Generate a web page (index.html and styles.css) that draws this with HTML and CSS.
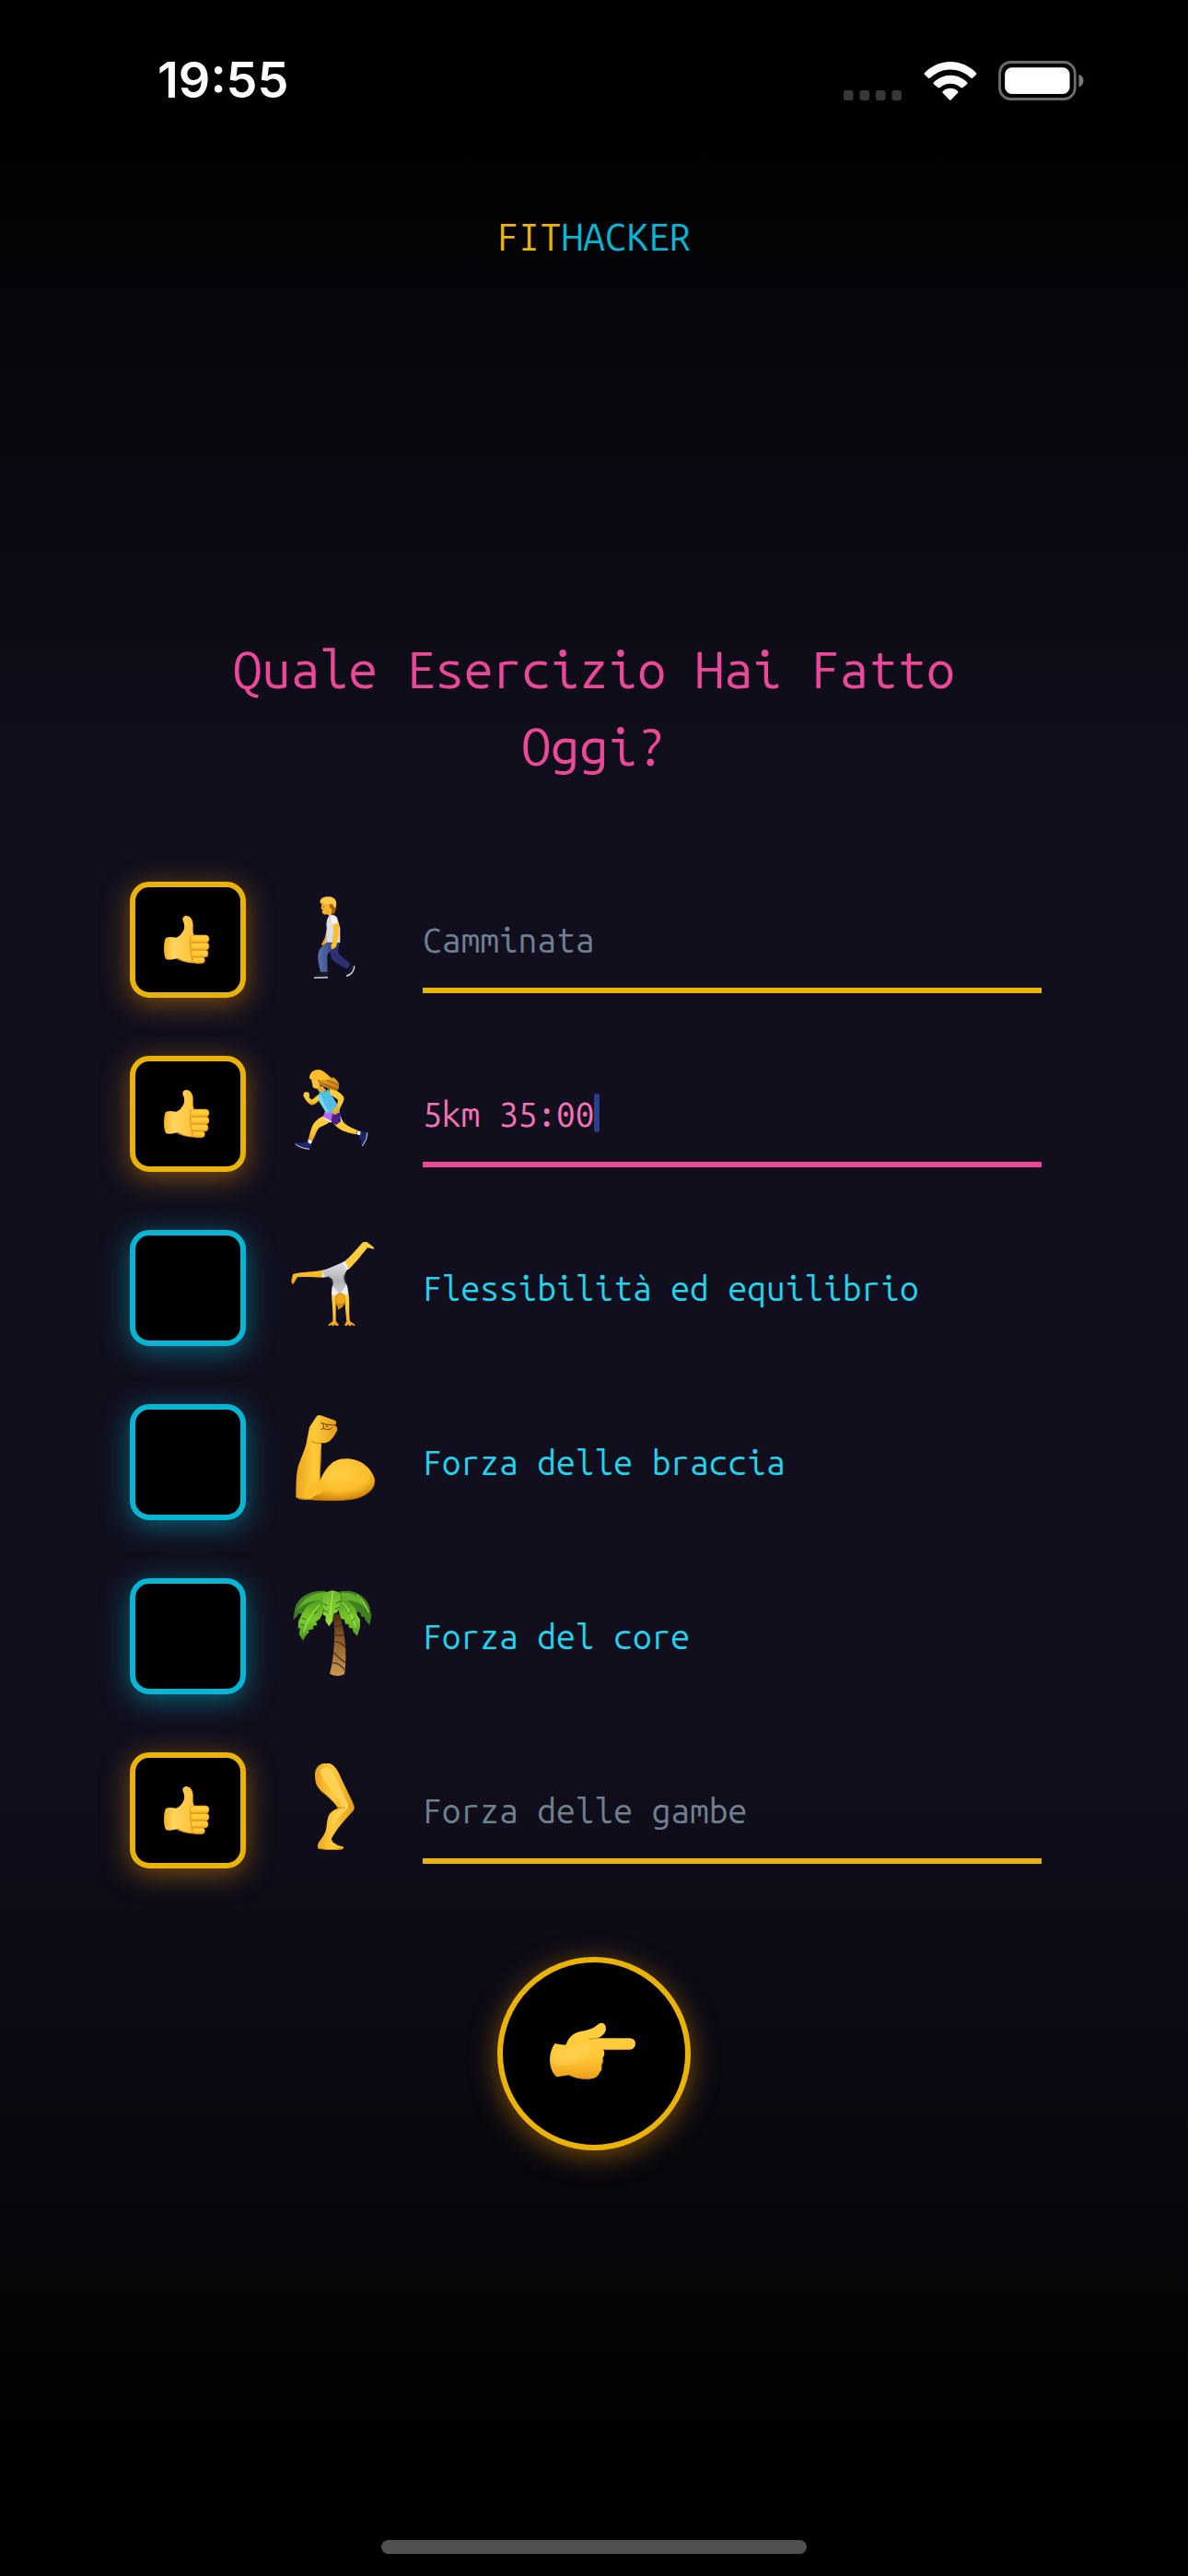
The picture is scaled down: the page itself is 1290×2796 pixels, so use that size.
FILE: index.html
```html
<!DOCTYPE html>
<html lang="it">
<head>
<meta charset="utf-8">
<meta name="viewport" content="width=device-width, initial-scale=1">
<title>FitHacker</title>
<link rel="stylesheet" href="styles.css">
</head>
<body>
<svg class="defs" width="0" height="0" aria-hidden="true">
  <defs>
    <linearGradient id="skin" x1="0" y1="0" x2="0" y2="1"><stop offset="0" stop-color="#ffcf45"/><stop offset=".6" stop-color="#ffc936"/><stop offset="1" stop-color="#eda01a"/></linearGradient>
    <linearGradient id="skin-side" x1="0" y1="0" x2="1" y2="0"><stop offset="0" stop-color="#f5b429"/><stop offset=".3" stop-color="#ffd560"/><stop offset="1" stop-color="#fdbf31"/></linearGradient>
    <linearGradient id="forearm" x1="0" y1="0" x2="1" y2="0"><stop offset="0" stop-color="#eba41c"/><stop offset=".45" stop-color="#ffcb3b"/><stop offset="1" stop-color="#e59b18"/></linearGradient>
    <radialGradient id="bicep" cx=".5" cy=".35" r=".65"><stop offset="0" stop-color="#ffcf43"/><stop offset=".65" stop-color="#fcbd2c"/><stop offset="1" stop-color="#cf8408"/></radialGradient>
    <linearGradient id="hair" x1="0" y1="0" x2="0" y2="1"><stop offset="0" stop-color="#ffc633"/><stop offset="1" stop-color="#b9710f"/></linearGradient>
    <linearGradient id="leaf" x1="0" y1="0" x2="0" y2="1"><stop offset="0" stop-color="#4f9a22"/><stop offset=".5" stop-color="#79c92b"/><stop offset="1" stop-color="#4c8f24"/></linearGradient>
    <linearGradient id="leaf-mid" x1="0" y1="0" x2="0" y2="1"><stop offset="0" stop-color="#66b52b"/><stop offset="1" stop-color="#9be23b"/></linearGradient>
    <linearGradient id="trunk" x1="0" y1="0" x2="0" y2="1"><stop offset="0" stop-color="#4a2a12"/><stop offset=".4" stop-color="#8a5a2b"/><stop offset="1" stop-color="#c79a4d"/></linearGradient>
    <linearGradient id="suit" x1="0" y1="0" x2="0" y2="1"><stop offset="0" stop-color="#e3e3e6"/><stop offset=".6" stop-color="#b0b0b4"/><stop offset="1" stop-color="#d6d6da"/></linearGradient>
    <linearGradient id="jeans" x1="0" y1="0" x2="1" y2="0"><stop offset="0" stop-color="#5870a8"/><stop offset="1" stop-color="#353f86"/></linearGradient>
    <symbol id="thumb" viewBox="93 84 378 378">
      <path fill="url(#skin-side)" d="M210 267Q222 262 243 266C255 262 262 253 268 242C273 231 270 220 266 211C263 202 268 195 277 195C290 195 299 209 299 225C299 238 297 247 302 257L312 345Q300 350 282 346C268 344 258 338 248 333Q228 341 211 337C202 324 202 282 210 267Z"/>
      <path fill="none" stroke="#e09a1c" stroke-width="3" d="M243 334C260 340 270 346 300 348M292 262C287 285 290 310 296 340"/>
      <g fill="url(#skin)" stroke="#d9911a" stroke-width="2">
        <rect x="297" y="329" width="40" height="21" rx="10"/>
        <rect x="292" y="306" width="56" height="24" rx="11"/>
        <rect x="291" y="282" width="60" height="25" rx="12"/>
        <rect x="289" y="258" width="62" height="25" rx="12"/>
      </g>
    </symbol>
  </defs>
</svg>

<div class="screen">
  <header class="status">
    <time class="clock">19:55</time>
    <div class="indicators">
      <svg width="65" height="11" viewBox="48 137 195 34" fill="#373737" role="img" aria-label="Nessun segnale"><rect x="48" y="137" width="33" height="34" rx="10"/><rect x="102" y="137" width="33" height="34" rx="10"/><rect x="156" y="137" width="33" height="34" rx="10"/><rect x="210" y="137" width="33" height="34" rx="10"/></svg>
      <svg width="58" height="42" viewBox="311 45 173 127" fill="#fff" role="img" aria-label="Wi-Fi"><path d="M313 81C361 33 434 33 482 81Q485 84 482 87L471 98Q468 101 464 98C425 62 370 62 331 98Q327 101 324 98L313 87Q310 84 313 81ZM343 112C373 82 422 82 452 112Q455 115 452 118L439 130Q436 133 432 130C411 112 384 112 363 130Q359 133 356 130L343 118Q340 115 343 112ZM373 142C387 129 408 129 422 142Q424 144 422 147L400 170Q397 173 394 170L372 147Q370 144 373 142Z"/></svg>
      <svg width="93" height="43" viewBox="552 44 280 130" role="img" aria-label="Batteria carica"><rect x="556" y="48.500" width="247" height="121" rx="36" fill="none" stroke="#6b6b6b" stroke-width="8.500"/><rect x="573" y="66" width="213" height="87" rx="23" fill="#fff"/><path fill="#7b7b7b" d="M816 89C826 91 831 100 831 109S826 127 816 130Z"/></svg>
    </div>
  </header>

  <main class="content">
    <p class="logo"><span class="logo-fit">FIT</span><span class="logo-hacker">HACKER</span></p>
    <h1 class="title">Quale Esercizio Hai Fatto Oggi?</h1>

    <form class="form">
      <ul class="exercises">
        <li class="exercise">
          <label class="toggle"><input class="box" type="checkbox" checked aria-label="Camminata fatta"><svg class="thumb" aria-hidden="true"><use href="#thumb"/></svg></label>
          <svg class="emoji" viewBox="615 120 288 288" aria-hidden="true">
            <path fill="#2b3070" d="M741 284L776 282C773 302 768 314 779 325L811 350L802 368C782 359 758 347 748 331Z"/>
            <path fill="url(#jeans)" d="M729 280L763 283C763 301 738 310 736 326L737 379L714 378C708 352 703 331 708 312C713 299 722 294 729 280Z"/>
            <path fill="#171d31" d="M716 378L738 378L738 394L694 395C695 388 704 385 712 384ZM812 358L822 357C825 370 815 387 803 391L797 388C807 379 809 367 812 358Z"/>
            <path fill="none" stroke="#dfe3e8" stroke-width="4" d="M693 397L738 396M824 358C825 371 815 388 798 391"/>
            <path fill="#eaa41d" d="M737 230L728 268L717 288L719 292L735 283Z"/>
            <path fill="#dcdde2" d="M742 194Q756 186 768 200L778 235L778 283L729 281C730 265 737 245 733 222Q734 205 742 194Z"/>
            <path fill="#b6b7c1" d="M733 240L736 280L730 281ZM760 225L764 260L756 281L752 281Z"/>
            <path fill="#ffc02a" d="M754 221L772 219C777 240 773 264 766 293Q758 306 750 303Q746 291 752 284C757 264 759 249 754 221Z"/>
            <path fill="#f1f1f4" d="M750 195Q763 192 771 218L753 223Q748 209 750 195Z"/>
            <path fill="#f4b02a" d="M718 155L752 152L753 184Q750 193 743 195L735 190Q722 194 719 183L721 174L716 173Z"/>
            <path fill="#a56410" d="M750 154L765 158Q766 178 758 189L750 186Q754 170 746 172L743 160Z"/>
            <path fill="#ffc94a" d="M713 154C710 138 726 131 742 133C761 133 770 148 764 168L757 166Q756 154 744 156Q728 158 713 154Z"/>
            <circle cx="724" cy="166" r="2" fill="#513012"/>
          </svg>
          <div class="field"><input class="note" type="text" placeholder="Camminata" aria-label="Camminata"></div>
        </li>
        <li class="exercise">
          <label class="toggle"><input class="box" type="checkbox" checked aria-label="Corsa fatta"><svg class="thumb" aria-hidden="true"><use href="#thumb"/></svg></label>
          <svg class="emoji" viewBox="615 117 288 288" aria-hidden="true">
            <path fill="#1c2763" d="M674 360L685 366L678 386Q653 386 634 373L633 365Q650 366 674 360ZM845 328L866 329Q868 352 851 373L845 370Q849 354 839 345Z"/>
            <path fill="none" stroke="#d9dfec" stroke-width="3" d="M632 367Q645 381 678 385M867 331Q867 354 850 375"/>
            <path fill="#f7f7fa" d="M674 352L688 357L683 368L673 363ZM835 325L845 327L843 340L832 337Z"/>
            <path fill="url(#skin)" d="M755 280L783 290Q796 309 834 323L831 337C798 331 774 323 758 303ZM725 276L750 285C748 303 716 308 707 318C699 330 696 344 688 357L675 352C681 330 684 310 696 296Q708 283 725 276Z"/>
            <path fill="#b867ef" d="M727 264L775 263L778 281L753 296L723 281Z"/>
            <path fill="#4d1c83" d="M754 267L778 264L784 292L765 306L748 296Z"/>
            <path fill="#e8e3f4" d="M723 280L751 294L748 299L725 286ZM778 276L786 293L781 298Z"/>
            <path fill="url(#skin)" d="M711 204L719 214Q699 243 684 241C672 236 663 220 659 213Q657 201 666 199Q679 197 678 212L677 217L686 224Z"/>
            <path fill="#edaa26" d="M700 183L721 180L733 194L714 205Z"/>
            <path fill="#50bfe6" d="M713 194Q730 205 738 188L755 216L776 252L777 266L731 266C725 250 709 235 707 219Q709 204 713 194Z"/>
            <path fill="#76d8f4" d="M713 202L727 238L742 264L732 265C724 248 709 233 707 220Z"/>
            <path fill="url(#skin)" d="M742 189C757 186 778 200 789 214Q793 222 786 235L773 261Q768 275 757 272Q749 265 754 256L767 247L771 224L746 206Z"/>
            <path fill="url(#hair)" d="M679 156C677 135 694 124 710 127C726 129 738 145 753 155L752 150Q765 155 774 171Q777 187 767 195Q746 192 731 184Q715 179 700 166Z"/>
            <path fill="#ffc43c" d="M684 158L704 159L714 181L700 188Q686 186 688 174Z"/>
            <path fill="#ffbd2e" d="M679 155C677 135 694 124 710 127C726 129 731 144 744 156C725 163 707 157 691 158Z"/>
            <path fill="none" stroke="#8e530d" stroke-width="3" d="M706 162C728 180 751 181 768 190M735 160C753 169 766 170 774 179"/>
          </svg>
          <div class="field"><input class="note note-active" type="text" value="5km 35:00" aria-label="Corsa"><span class="caret"></span></div>
        </li>
        <li class="exercise">
          <label class="toggle"><input class="box" type="checkbox" id="flex"></label>
          <svg class="emoji" viewBox="615 114 288 288" aria-hidden="true">
            <path fill="url(#skin)" d="M724 208L721 233C695 231 664 230 639 232L625 255Q619 252 619 244L624 222C658 213 693 217 724 208ZM788 184C814 164 833 139 852 118L865 117L888 135L887 141Q876 137 867 136C850 156 829 186 804 208Z"/>
            <path fill="url(#skin)" d="M750 276L764 288L764 374L774 387L769 391L759 386L755 392L750 387L741 391L739 387L754 375C756 343 750 307 750 276ZM804 276L791 288L799 376L792 388L797 391L805 386L810 392L815 386L824 391L827 387L810 375C805 341 811 309 804 276Z"/>
            <path fill="url(#suit)" d="M720 210C742 202 769 192 794 179L806 203Q790 216 793 238Q797 255 803 267L804 289L752 290L751 267Q758 252 752 238L737 231L721 233Z"/>
            <path fill="none" stroke="#34343b" stroke-width="3" d="M737 230Q753 232 751 251M792 224Q788 236 796 251"/>
            <path fill="#eeeef2" d="M753 260L773 283L761 294L750 286ZM800 255L804 284L793 292L782 281ZM793 180L806 204L799 208L787 184ZM721 210L728 231L719 232Z"/>
            <path fill="#d88c10" d="M764 292Q778 273 795 293Q800 318 779 334L769 338L771 329Q756 315 764 292Z"/>
            <circle cx="779" cy="302" r="16" fill="#efa61f"/>
          </svg>
          <label class="name" for="flex">Flessibilità ed equilibrio</label>
        </li>
        <li class="exercise">
          <label class="toggle"><input class="box" type="checkbox" id="arms"></label>
          <svg class="emoji" viewBox="615 111 288 288" aria-hidden="true">
            <path fill="url(#bicep)" d="M711 326C728 291 749 253 793 253C841 250 880 281 891 320C893 352 862 375 823 384C771 393 709 389 657 384L670 344Z"/>
            <path fill="url(#forearm)" d="M678 150L702 114Q709 109 719 113L762 128Q770 135 761 145Q769 147 769 160Q760 179 751 188Q739 203 717 202C716 247 713 289 714 322Q730 341 713 359L682 384Q650 391 634 379C635 338 633 297 645 266C657 235 668 211 670 191Z"/>
            <path fill="#fbbd2a" d="M664 345C681 329 709 322 723 333Q739 354 708 370L660 383Z"/>
            <path fill="none" stroke="#74450b" stroke-width="3" stroke-linecap="round" d="M716 136L736 142L762 144M722 139L725 154L716 157M725 155Q743 163 753 151M733 143Q731 151 738 150"/>
            <path fill="none" stroke="#c37a0c" stroke-width="3" d="M717 202Q699 207 684 195M715 218L712 323"/>
            <path fill="none" stroke="#a86b0b" stroke-width="3" opacity=".7" d="M635 379C672 389 767 393 823 384C862 376 889 354 890 334"/>
          </svg>
          <label class="name" for="arms">Forza delle braccia</label>
        </li>
        <li class="exercise">
          <label class="toggle"><input class="box" type="checkbox" id="core"></label>
          <svg class="emoji" viewBox="615 108 288 288" aria-hidden="true">
            <path fill="url(#trunk)" d="M755 188L776 188C791 238 803 311 792 384Q770 396 744 383C761 321 763 242 755 188Z"/>
            <path fill="none" stroke="#4a2b13" stroke-width="4" d="M757 231L783 224M761 256Q776 262 792 256M761 278Q781 280 796 297M757 314Q773 332 795 347M752 348Q774 345 792 370"/>
            <path fill="#3f7f20" d="M732 114C682 109 642 132 631 169L625 208L639 195L641 188L655 187L658 175L677 180L700 162L723 153ZM771 117C820 104 860 128 873 163L880 194L874 225L859 207L857 199L845 196L844 184L831 181L819 163L789 152Z"/>
            <path fill="url(#leaf)" d="M727 143C687 143 659 168 650 196L642 213L641 236L648 234L644 254L657 275L667 258L677 248L675 241L691 238L690 228L704 224L699 214L713 203L725 176ZM776 136C814 145 832 172 834 192L843 207L843 230L834 260L820 246L819 236L807 233L805 222L795 221L792 206L781 204L771 171Z"/>
            <path fill="#65ae2a" d="M735 117C689 116 654 141 637 176Q674 139 725 145ZM782 120C821 116 855 139 870 177Q833 137 784 145Z"/>
            <path fill="url(#leaf-mid)" d="M724 125Q754 100 782 126C777 145 781 164 768 183L756 188L754 211L742 229L730 211L731 196L721 190L726 173L720 158Z"/>
            <path fill="none" stroke="#b3ed62" stroke-width="3" d="M754 112L746 190M712 157Q674 194 659 248M786 150Q816 181 828 231M832 126Q858 145 871 183"/>
            <path fill="none" stroke="#2b621b" stroke-width="3" d="M722 154L736 162M723 176L739 184M780 146L764 154M776 166L761 173M653 202L667 207M650 222L660 227M704 180L693 188M806 188L814 181M817 211L827 202"/>
          </svg>
          <label class="name" for="core">Forza del core</label>
        </li>
        <li class="exercise">
          <label class="toggle"><input class="box" type="checkbox" checked aria-label="Forza delle gambe fatta"><svg class="thumb" aria-hidden="true"><use href="#thumb"/></svg></label>
          <svg class="emoji" viewBox="615 105 288 288" aria-hidden="true">
            <path fill="url(#forearm)" d="M696 146C694 117 714 103 735 104C760 105 771 129 781 153L817 227L825 248Q825 257 814 266C794 289 767 316 749 352L755 362Q769 373 787 376Q792 382 784 385Q756 389 727 384L707 383Q702 373 708 362Q722 347 730 328C735 315 734 291 741 274Q751 257 771 251C754 222 730 208 711 189Q696 174 696 146Z"/>
            <path fill="#ffd254" d="M714 126Q734 108 750 126C763 151 783 190 801 231Q811 249 792 262Q768 282 756 304Q747 273 785 250C777 212 717 169 714 126Z"/>
            <path fill="none" stroke="#d18a12" stroke-width="3" d="M712 191C732 209 757 225 771 249L795 249M708 382Q744 389 787 383"/>
          </svg>
          <div class="field"><input class="note" type="text" placeholder="Forza delle gambe" aria-label="Forza delle gambe"></div>
        </li>
      </ul>
      <button class="next" type="button" aria-label="Avanti">
        <svg class="hand" viewBox="135 123 594 594" aria-hidden="true">
          <path fill="url(#skin)" d="M305 387Q323 392 341 391C347 370 363 354 386 348C411 343 428 340 443 326Q455 317 465 323Q473 330 470 346Q463 363 443 370L550 370Q567 372 567 388Q566 404 551 407L463 407Q470 422 460 434Q463 447 456 458Q461 470 450 482Q445 499 421 502C397 504 373 501 352 490L310 496C281 469 283 414 305 387Z"/>
          <path fill="#ffd561" opacity=".4" d="M308 402L350 403Q381 384 420 389Q426 412 397 441Q361 462 307 459Q294 430 308 402Z"/>
          <path fill="none" stroke="#d98f14" stroke-width="3" stroke-linecap="round" d="M415 372Q429 373 443 370M462 406Q479 408 550 406M460 434Q463 447 456 458M352 489C373 501 397 503 421 501"/>
        </svg>
      </button>
    </form>
  </main>
  <div class="home"></div>
</div>
</body>
</html>
```
FILE: styles.css
```css
* {
  box-sizing: border-box;
}

body {
  margin: 0;
  background: #000;
  font-family: "Ubuntu Mono", "DejaVu Sans Mono", monospace;
  font-size: 37px;
}

.defs {
  position: absolute;
}

.screen {
  display: flex;
  flex-direction: column;
  min-height: 100vh;
  padding-bottom: 24px;
  background: linear-gradient(#000 4%, #050509 11%, #0a0a13 21%, #110f1d 31%, #110f1d 67%, #0a0a13 79%, #050508 89%, #000 96%);
}

.status {
  display: flex;
  justify-content: space-between;
  align-items: center;
  padding: 65px 113px 0 171px;
}

.clock {
  color: #fff;
  font: 600 54px/44px Inter, sans-serif;
}

.indicators {
  display: flex;
  align-items: flex-end;
  gap: 23px;
}

.content {
  flex: 1;
}

.logo {
  margin: 118px 0 0;
  font-size: 42px;
  line-height: 60px;
  text-align: center;
}

.logo-fit {
  color: #eab308;
}

.logo-hacker {
  color: #06b6d4;
}

.title {
  margin: 398px 192px 104px;
  color: #ec4899;
  font-size: 56px;
  font-weight: 400;
  line-height: 84px;
  text-align: center;
}

.form {
  display: flex;
  flex-direction: column;
  align-items: center;
  gap: 96px;
}

.exercises {
  display: flex;
  flex-direction: column;
  gap: 63px;
  align-self: stretch;
  margin: 0;
  padding: 0 159px 0 141px;
  list-style: none;
}

.exercise {
  display: grid;
  grid-template-columns: 126px 96px 1fr;
  align-items: center;
  column-gap: 48px;
}

.toggle {
  display: grid;
}

.box {
  grid-area: 1 / 1;
  appearance: none;
  width: 126px;
  height: 126px;
  margin: 0;
  border: 6px solid #06b6d4;
  border-radius: 21px;
  background: #000;
  box-shadow: 0 6px 30px rgba(6, 182, 212, 0.5);
}

.box:checked {
  border-color: #eab308;
  box-shadow: 0 6px 30px rgba(234, 140, 8, 0.5);
}

.thumb {
  grid-area: 1 / 1;
  width: 126px;
  height: 126px;
  pointer-events: none;
}

.emoji {
  width: 96px;
  height: 102px;
  padding-bottom: 6px;
}

.field {
  position: relative;
}

.note {
  display: block;
  width: 100%;
  height: 116px;
  padding: 6px 0 0;
  border: 0;
  border-bottom: 6px solid #eab308;
  border-radius: 0;
  outline: 0;
  background: transparent;
  color: #f472b6;
  font: inherit;
}

.note::placeholder {
  color: #708090;
  opacity: 1;
}

.note-active {
  border-color: #ec4899;
}

.caret {
  position: absolute;
  top: 36px;
  left: 186px;
  width: 6px;
  height: 42px;
  border-radius: 3px;
  background: #2c3e8c;
}

.name {
  color: #22d3ee;
}

.next {
  width: 210px;
  height: 210px;
  padding: 0;
  border: 6px solid #eab308;
  border-radius: 50%;
  background: #000;
  box-shadow: 0 6px 30px rgba(234, 140, 8, 0.5);
}

.hand {
  display: block;
  width: 198px;
  height: 198px;
}

.home {
  align-self: center;
  width: 462px;
  height: 15px;
  border-radius: 8px;
  background: #515151;
}
```
